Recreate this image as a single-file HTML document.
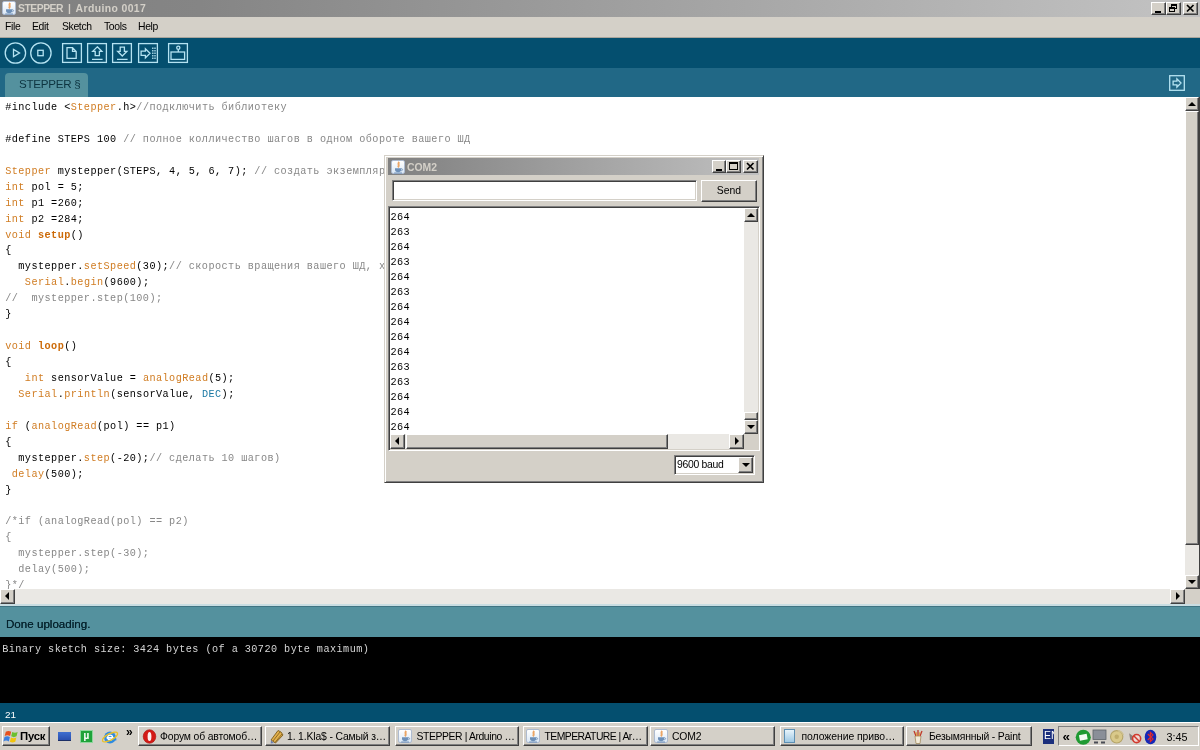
<!DOCTYPE html>
<html lang="ru">
<head>
<meta charset="utf-8">
<title>STEPPER | Arduino 0017</title>
<style>
*{box-sizing:border-box;margin:0;padding:0}
html,body{width:1200px;height:750px;overflow:hidden;background:#d4d0c8}
body{will-change:transform;position:relative;font-family:"Liberation Sans","DejaVu Sans",sans-serif;font-size:10.5px;color:#000}
.abs{position:absolute}
#titlebar{left:0;top:0;width:1200px;height:17px;background:linear-gradient(to right,#808080 0,#858585 200px,#c0c0c0 1150px,#c0c0c0 100%)}
#titletext{left:18px;top:1px;height:15px;line-height:15px;font-weight:bold;font-size:10.4px;color:#d4d0c8;white-space:nowrap;letter-spacing:0.22px}
#menubar{left:0;top:17px;width:1200px;height:20px;background:#d4d0c8}
.mi{top:20px;height:14px;line-height:14px;font-size:10.4px;white-space:nowrap;letter-spacing:-0.35px}
#toolbar{left:0;top:37px;width:1200px;height:31px;background:#044f6f;border-top:1px solid #a9a59c}
#tabbar{left:0;top:68px;width:1200px;height:29px;background:#216886}
#tab{left:5px;top:73px;width:83px;height:24px;background:#54919e;border-radius:4px 4px 0 0}
#tabtext{left:19px;top:77px;height:14px;line-height:14px;font-size:11.6px;color:#0d3440;white-space:nowrap;letter-spacing:-0.25px}
#editor{left:0;top:97px;width:1185px;height:492px;background:#fff;overflow:hidden}
pre.code{position:absolute;left:5.200px;top:3px;font-family:"Liberation Mono","DejaVu Sans Mono",monospace;font-size:10.200px;letter-spacing:0.4425px;line-height:15.9375px;color:#000;white-space:pre}
.k{color:#d07c22}.kb{color:#cc6a08;font-weight:bold}.c{color:#878787}.l{color:#1a78a3}
.btn{background:#d4d0c8;border:1px solid;border-color:#fff #404040 #404040 #fff;box-shadow:inset -1px -1px 0 #808080}
.track{background:#eae8e4}
#status{left:0;top:605.500px;width:1200px;height:32px;background:#54919e;border-top:1px solid #3f7482}
#statustext{left:6px;top:617px;height:14px;line-height:14px;font-size:11.6px;color:#06242e;white-space:nowrap;text-shadow:0 0 .6px #06242e}
#console{left:0;top:637px;width:1200px;height:66px;background:#000}
#context{left:2.200px;top:642px;font-family:"Liberation Mono","DejaVu Sans Mono",monospace;font-size:10.200px;letter-spacing:0.4425px;line-height:15px;color:#d6d6d6;white-space:pre}
#linestatus{left:0;top:703px;width:1200px;height:19px;background:#044f6f}
#linenum{left:5px;top:708.500px;font-size:9.9px;line-height:12px;color:#fff}
#taskbar{left:0;top:722px;width:1200px;height:28px;background:#d4d0c8;border-top:1px solid #fff}
.tb{top:726px;height:20px;font-size:10.4px;line-height:18px;white-space:nowrap;overflow:hidden;padding-left:22px}

.cap{top:2px;width:15px;height:13px}
.ico{stroke:#b5e3f2;fill:none;stroke-width:1.3}
.sq{top:43px;width:20px;height:20px;border:1.5px solid #b5e3f2}
svg{position:absolute;overflow:visible}
.java{width:14px;height:14px;background:linear-gradient(#ffffff,#dbe8f6);border:1px solid #aebbd0;border-radius:2px}
.arrow{position:absolute;width:0;height:0;border:4px solid transparent}

#com{left:384px;top:155px;width:380px;height:328px;background:#d4d0c8;border:1px solid;border-color:#d4d0c8 #404040 #404040 #d4d0c8;box-shadow:inset 1px 1px 0 #fff,inset -1px -1px 0 #808080}
#comtitle{left:3px;top:2px;width:371px;height:17px;background:linear-gradient(to right,#808080,#c0c0c0)}
#comtext{left:22px;top:4px;height:15px;line-height:15px;font-weight:bold;font-size:10.4px;color:#d4d0c8;white-space:nowrap}
.sunk{border:1px solid;border-color:#808080 #fff #fff #808080;box-shadow:inset 1px 1px 0 #404040,inset -1px -1px 0 #d4d0c8;background:#fff}
#serial{left:5.500px;top:53.800px;font-family:"Liberation Mono","DejaVu Sans Mono",monospace;font-size:10.200px;letter-spacing:0.4425px;line-height:15px;color:#000;white-space:pre}

.tbtn{position:absolute;top:726px;height:20px;width:124px;font-size:10.4px;line-height:19px;white-space:nowrap;overflow:hidden;padding-left:21px;letter-spacing:-0.15px}
.tbi{position:absolute;top:729px;width:14px;height:14px}
</style>
</head>
<body>
<div id="titlebar" class="abs"></div>
<div id="titletext" class="abs"><span style="letter-spacing:-0.5px;word-spacing:2.700px">STEPPER | </span><span style="letter-spacing:0.4px">Arduino 0017</span></div>
<!-- title bar icon and caption buttons -->
<div class="abs java" style="left:2px;top:1px"><svg width="13" height="13" style="left:0;top:0" viewBox="0 0 13 13"><path d="M7.2 1 C5 3.2 8.2 4 6 6.4" stroke="#eba565" stroke-width="2" fill="none"/><path d="M3 7.2h6.2v1.6c0 1.6-1.2 2.4-3.1 2.4S3 10.400 3 8.800z" fill="#6e90b8"/><path d="M9.200 7.700c1.800-.2 1.800 2 0 2" stroke="#6e90b8" stroke-width=".9" fill="none"/><path d="M2.200 12h7.800" stroke="#6e90b8" stroke-width="1"/></svg></div>
<div class="abs btn cap" style="left:1151px"><div class="abs" style="left:3px;top:8px;width:6px;height:2px;background:#000"></div></div>
<div class="abs btn cap" style="left:1166px"><div class="abs" style="left:4px;top:1px;width:6px;height:5px;border:1px solid #000;border-top-width:2px"></div><div class="abs" style="left:2px;top:4px;width:6px;height:5px;border:1px solid #000;border-top-width:2px;background:#d4d0c8"></div></div>
<div class="abs btn cap" style="left:1183px"><svg width="13" height="11" style="left:0;top:0" viewBox="0 0 13 11"><path d="M3 2l6.500 6.500M9.500 2L3 8.500" stroke="#000" stroke-width="1.7"/></svg></div>
<div id="menubar" class="abs"></div>
<div class="abs mi" style="left:5px">File</div>
<div class="abs mi" style="left:32px">Edit</div>
<div class="abs mi" style="left:62px">Sketch</div>
<div class="abs mi" style="left:104px">Tools</div>
<div class="abs mi" style="left:138px">Help</div>
<div id="toolbar" class="abs"></div>
<div id="tabbar" class="abs"></div>
<div id="tab" class="abs"></div>
<div id="tabtext" class="abs">STEPPER §</div>
<!-- toolbar icons -->
<svg width="190" height="31" style="left:0;top:37px" viewBox="0 0 190 31">
<g class="ico">
<circle cx="15.400" cy="16" r="10.200"/>
<path d="M13.500 12.500v7l6-3.500z"/>
<circle cx="40.900" cy="16" r="10.200"/>
<rect x="37.800" y="13.300" width="5.400" height="5.400"/>
<rect x="62.600" y="6.600" width="18.800" height="18.800"/>
<path d="M67 10.700h5.500l3.700 3.700v7h-9.200z M72.500 10.700v3.700h3.700"/>
<rect x="87.600" y="6.600" width="18.800" height="18.800"/>
<path d="M97.300 9.800l4.600 4.600h-2.500v4.300h-4.200v-4.300h-2.500z M92 22.300h10.600"/>
<rect x="112.600" y="6.600" width="18.800" height="18.800"/>
<path d="M122.300 19l4.600-4.600h-2.500v-4.300h-4.200v4.300h-2.500z M117 22.300h10.600"/>
<rect x="138.600" y="6.600" width="18.800" height="18.800"/>
<path d="M150 16.300l-4.600-4.600v2.500h-4.300v4.200h4.300v2.500z"/>
<path d="M152.800 10.500v11.500 M155 10.500v11.500" stroke-dasharray="1.500 1"/>
<rect x="168.600" y="6.600" width="18.800" height="18.800"/>
<rect x="171" y="15" width="13.600" height="7.400"/>
<circle cx="178.300" cy="10.800" r="1.600"/>
<path d="M178.300 12.400v2.600"/>
</g>
</svg>
<!-- tab menu button -->
<svg width="17" height="17" style="left:1169px;top:75px" viewBox="0 0 17 17"><g class="ico"><rect x=".7" y=".7" width="14.600" height="14.600"/><path d="M12 8l-4.100-4.100v2.200h-3.800v3.800h3.800v2.200z"/></g></svg>
<div id="editor" class="abs">
<pre class="code">#include &lt;<span class="k">Stepper</span>.h&gt;<span class="c">//подключить библиотеку</span>

#define STEPS 100 <span class="c">// полное колличество шагов в одном обороте вашего ШД</span>

<span class="k">Stepper</span> mystepper(STEPS, 4, 5, 6, 7); <span class="c">// создать экземпляр</span>
<span class="k">int</span> pol = 5;
<span class="k">int</span> p1 =260;
<span class="k">int</span> p2 =284;
<span class="k">void</span> <span class="kb">setup</span>()
{
  mystepper.<span class="k">setSpeed</span>(30);<span class="c">// скорость вращения вашего ШД, х</span>
   <span class="k">Serial</span>.<span class="k">begin</span>(9600);
<span class="c">//  mystepper.step(100);</span>
}

<span class="k">void</span> <span class="kb">loop</span>()
{
   <span class="k">int</span> sensorValue = <span class="k">analogRead</span>(5);
  <span class="k">Serial</span>.<span class="k">println</span>(sensorValue, <span class="l">DEC</span>);

<span class="k">if</span> (<span class="k">analogRead</span>(pol) == p1)
{
  mystepper.<span class="k">step</span>(-20);<span class="c">// сделать 10 шагов)</span>
 <span class="k">delay</span>(500);
}

<span class="c">/*if (analogRead(pol) == p2)
{
  mystepper.step(-30);
  delay(500);
}*/</span></pre>
</div>
<!-- editor scrollbars -->
<div class="abs track" style="left:1185px;top:97px;width:15px;height:492px"></div>
<div class="abs" style="left:1199px;top:97px;width:1px;height:492px;background:#404040"></div>
<div class="abs btn" style="left:1185px;top:97px;width:14px;height:14px"><div class="arrow" style="left:2px;top:0px;border-bottom-color:#000"></div></div>
<div class="abs btn" style="left:1185px;top:111px;width:14px;height:434px"></div>
<div class="abs btn" style="left:1185px;top:575px;width:14px;height:14px"><div class="arrow" style="left:2px;top:4px;border-top-color:#000"></div></div>
<div class="abs track" style="left:0;top:589px;width:1185px;height:15px"></div>
<div class="abs btn" style="left:0;top:589px;width:15px;height:15px"><div class="arrow" style="left:0px;top:2px;border-right-color:#000"></div></div>
<div class="abs btn" style="left:1170px;top:589px;width:15px;height:15px"><div class="arrow" style="left:5px;top:2px;border-left-color:#000"></div></div>
<div class="abs" style="left:1185px;top:589px;width:15px;height:16px;background:#d4d0c8"></div>
<div class="abs" style="left:0;top:604px;width:1200px;height:2px;background:#c9dde2"></div>
<!-- COM2 serial monitor window -->
<div id="com" class="abs">
<div id="comtitle" class="abs"></div>
<div class="abs java" style="left:5.500px;top:4px;width:14px;height:14px"><svg width="13" height="13" style="left:0;top:0" viewBox="0 0 13 13"><path d="M7.2 1 C5 3.2 8.2 4 6 6.4" stroke="#eba565" stroke-width="2" fill="none"/><path d="M3 7.2h6.2v1.6c0 1.6-1.2 2.4-3.1 2.4S3 10.400 3 8.800z" fill="#6e90b8"/><path d="M9.200 7.700c1.800-.2 1.800 2 0 2" stroke="#6e90b8" stroke-width=".9" fill="none"/><path d="M2.200 12h7.800" stroke="#6e90b8" stroke-width="1"/></svg></div>
<div id="comtext" class="abs">COM2</div>
<div class="abs btn" style="left:327px;top:4px;width:14px;height:13px"><div class="abs" style="left:3px;top:8px;width:6px;height:2px;background:#000"></div></div>
<div class="abs btn" style="left:341px;top:4px;width:15px;height:13px"><div class="abs" style="left:2px;top:1px;width:9px;height:8px;border:1px solid #000;border-top-width:2px"></div></div>
<div class="abs btn" style="left:358px;top:4px;width:15px;height:13px"><svg width="13" height="11" style="left:0;top:0" viewBox="0 0 13 11"><path d="M3 2l6.500 6.500M9.500 2L3 8.500" stroke="#000" stroke-width="1.700"/></svg></div>
<div class="abs sunk" style="left:6.500px;top:24px;width:305.500px;height:21px"></div>
<div class="abs btn" style="left:316px;top:24px;width:56px;height:22px;text-align:center;line-height:19px;font-size:10.4px">Send</div>
<div class="abs sunk" style="left:3px;top:50px;width:372px;height:245px"></div>
<div id="serial" class="abs">264
263
264
263
264
263
264
264
264
264
263
263
264
264
264</div>
<!-- vertical scrollbar -->
<div class="abs track" style="left:359px;top:52px;width:14px;height:226px"></div>
<div class="abs btn" style="left:359px;top:52px;width:14px;height:14px"><div class="arrow" style="left:2px;top:0px;border-bottom-color:#000"></div></div>
<div class="abs btn" style="left:359px;top:256px;width:14px;height:8px"></div>
<div class="abs btn" style="left:359px;top:264px;width:14px;height:14px"><div class="arrow" style="left:2px;top:4px;border-top-color:#000"></div></div>
<!-- horizontal scrollbar -->
<div class="abs track" style="left:5px;top:278px;width:354px;height:15px"></div>
<div class="abs btn" style="left:5px;top:278px;width:15px;height:15px"><div class="arrow" style="left:0px;top:2px;border-right-color:#000"></div></div>
<div class="abs btn" style="left:21px;top:278px;width:262px;height:15px"></div>
<div class="abs btn" style="left:344px;top:278px;width:15px;height:15px"><div class="arrow" style="left:5px;top:2px;border-left-color:#000"></div></div>
<div class="abs" style="left:359px;top:278px;width:14px;height:15px;background:#d4d0c8"></div>
<!-- baud combo -->
<div class="abs sunk" style="left:289px;top:299px;width:81px;height:20px"></div>
<div class="abs" style="left:292px;top:302px;font-size:10.4px;line-height:14px;white-space:nowrap;letter-spacing:-0.3px">9600 baud</div>
<div class="abs btn" style="left:353px;top:301px;width:15px;height:16px"><div class="arrow" style="left:2.500px;top:5px;border-top-color:#000"></div></div>
</div>
<div id="status" class="abs"></div>
<div id="statustext" class="abs">Done uploading.</div>
<div id="console" class="abs"></div>
<div id="context" class="abs">Binary sketch size: 3424 bytes (of a 30720 byte maximum)</div>
<div id="linestatus" class="abs"></div>
<div id="linenum" class="abs">21</div>
<div id="taskbar" class="abs"></div>
<!-- taskbar -->
<div class="abs btn" style="left:2px;top:726px;width:48px;height:20px"></div>
<svg width="16.500" height="14" style="left:3.500px;top:728.500px" viewBox="0 0 15 13"><path d="M1.500 2.500q2.500-1.500 5 0l-1 4q-2.500-1.500-5 0z" fill="#e6501e"/><path d="M7.500 2.800q2.500 1.500 5 0l-1 4q-2.500 1.500-5 0z" fill="#6cc02e"/><path d="M0.300 7.500q2.500-1.500 5 0l-1 4q-2.500-1.500-5 0z" fill="#3b7fe0"/><path d="M6.300 7.800q2.500 1.500 5 0l-1 4q-2.500 1.500-5 0z" fill="#f2c40c"/></svg>
<div class="abs" style="left:20px;top:728px;font-size:11.3px;line-height:16px;font-weight:bold;white-space:nowrap;letter-spacing:-0.2px">Пуск</div>
<!-- quick launch -->
<div class="abs" style="left:58px;top:732px;width:13px;height:9px;background:linear-gradient(#3f6fd0,#2a4fae);border-bottom:1px solid #1d2f66"></div>
<div class="abs" style="left:80px;top:730px;width:13px;height:13px;background:#1fa33a;border:1px solid #8fd69c;color:#fff;font-weight:bold;font-size:10px;line-height:10px;text-align:center">µ</div>
<svg width="18" height="16" style="left:100.500px;top:728.500px" viewBox="0 0 17 15"><circle cx="8.500" cy="8" r="5.600" fill="#2f8be0"/><path d="M5.300 8.300h6.600" stroke="#fff" stroke-width="1.700"/><circle cx="8.600" cy="8" r="2.300" fill="none" stroke="#fff" stroke-width="1.200"/><path d="M11 9.800h3.500" stroke="#2f8be0" stroke-width="2"/><ellipse cx="8.500" cy="7.500" rx="8" ry="3" transform="rotate(-28 8.500 7.500)" fill="none" stroke="#e8c02a" stroke-width="1.300"/></svg>
<div class="abs" style="left:126px;top:725px;font-size:12px;line-height:14px;font-weight:bold">»</div>
<!-- task buttons -->
<div class="tbtn btn" style="left:138px">Форум об автомоб…</div>
<svg width="15" height="15" style="left:142px;top:729px" viewBox="0 0 15 15"><ellipse cx="7.500" cy="7.500" rx="6.300" ry="6.800" fill="#d41a16" stroke="#a80f0c" stroke-width=".6"/><ellipse cx="7.500" cy="7.500" rx="1.900" ry="4.500" fill="#fdeeee"/></svg>
<div class="tbtn btn" style="left:265px;width:125px">1. 1.Kla$ - Самый з…</div>
<svg width="16" height="15" style="left:269px;top:729px" viewBox="0 0 16 15"><path d="M2 11l7-9.500 3 1.500 2 3-7.500 8z" fill="#e3b04b" stroke="#7a5a1c" stroke-width=".9"/><path d="M4 12l7-9M6 13.500l7-8.500" stroke="#7a5a1c" stroke-width=".8" fill="none"/><path d="M2 11l1.800 2.200 1.700.8-3.800.6z" fill="#6c7fae"/></svg>
<div class="tbtn btn" style="left:394.500px;letter-spacing:-0.4px">STEPPER | Arduino …</div>
<div class="abs java" style="left:398px;top:729px;width:14px;height:14px"><svg width="13" height="13" style="left:0;top:0" viewBox="0 0 13 13"><path d="M7.2 1 C5 3.2 8.2 4 6 6.4" stroke="#eba565" stroke-width="2" fill="none"/><path d="M3 7.200h6.200v1.600c0 1.600-1.200 2.400-3.100 2.400S3 10.400 3 8.800z" fill="#6e90b8"/><path d="M9.200 7.700c1.800-.2 1.800 2 0 2" stroke="#6e90b8" stroke-width=".9" fill="none"/><path d="M2.200 12h7.800" stroke="#6e90b8" stroke-width="1"/></svg></div>
<div class="tbtn btn" style="left:522.500px;width:125px;letter-spacing:-0.55px">TEMPERATURE | Ar…</div>
<div class="abs java" style="left:526px;top:729px;width:14px;height:14px"><svg width="13" height="13" style="left:0;top:0" viewBox="0 0 13 13"><path d="M7.2 1 C5 3.2 8.2 4 6 6.4" stroke="#eba565" stroke-width="2" fill="none"/><path d="M3 7.200h6.200v1.600c0 1.600-1.200 2.400-3.100 2.400S3 10.400 3 8.800z" fill="#6e90b8"/><path d="M9.200 7.700c1.800-.2 1.800 2 0 2" stroke="#6e90b8" stroke-width=".9" fill="none"/><path d="M2.200 12h7.800" stroke="#6e90b8" stroke-width="1"/></svg></div>
<div class="tbtn btn" style="left:650px;width:125px">COM2</div>
<div class="abs java" style="left:654px;top:729px;width:14px;height:14px"><svg width="13" height="13" style="left:0;top:0" viewBox="0 0 13 13"><path d="M7.2 1 C5 3.2 8.2 4 6 6.4" stroke="#eba565" stroke-width="2" fill="none"/><path d="M3 7.200h6.200v1.600c0 1.600-1.200 2.400-3.100 2.400S3 10.400 3 8.800z" fill="#6e90b8"/><path d="M9.200 7.700c1.800-.2 1.800 2 0 2" stroke="#6e90b8" stroke-width=".9" fill="none"/><path d="M2.200 12h7.800" stroke="#6e90b8" stroke-width="1"/></svg></div>
<div class="tbtn btn" style="left:779.500px;letter-spacing:-0.05px">положение приво…</div>
<div class="abs" style="left:784px;top:729px;width:11px;height:14px;background:linear-gradient(#e8f4fb,#9fc9e4);border:1px solid #5d8fb3"></div>
<div class="tbtn btn" style="left:906px;width:126px;padding-left:22px;letter-spacing:-0.2px">Безымянный - Paint</div>
<svg width="14" height="15" style="left:911px;top:729px" viewBox="0 0 14 15"><path d="M4 7h6l-1 7.500h-4z" fill="#f2ead8" stroke="#a08a60" stroke-width=".8"/><path d="M5 7l-2-5M7 7v-6M9 7l2-5" stroke="#c0392b" stroke-width="1.300"/><path d="M6 7l-1-4M8 7l1-4" stroke="#d9a441" stroke-width="1"/></svg>
<!-- language + tray -->
<div class="abs" style="left:1043px;top:729px;width:11px;height:15px;background:#1c2f7c;color:#fff;font-size:10.4px;line-height:14px;overflow:hidden;white-space:nowrap;padding-left:1px">EN</div>
<div class="abs" style="left:1058px;top:726px;width:141px;height:20px;border:1px solid;border-color:#808080 #fff #fff #808080"></div>
<div class="abs" style="left:1062.500px;top:729.500px;font-size:13.500px;line-height:14px;font-weight:bold">«</div>
<svg width="16.500" height="16.500" style="left:1074.500px;top:728.500px" viewBox="0 0 16 16"><circle cx="8" cy="8" r="7.300" fill="#1f9a32"/><path d="M3.800 6l7.500-1.300 1 5.300-7.500 1.300z" fill="#f4fbf4"/></svg>
<svg width="15" height="16" style="left:1092px;top:729px" viewBox="0 0 15 16"><rect x="1" y="1" width="13" height="9.500" fill="#8a8f98" stroke="#5d6168" stroke-width=".8"/><path d="M2 13.500h4M9 13.500h4" stroke="#4a4d55" stroke-width="1.800"/></svg>
<svg width="16.500" height="16.500" style="left:1108.500px;top:727.500px" viewBox="0 0 15 15"><circle cx="7" cy="8" r="5.600" fill="#d9c98a" stroke="#b5a468" stroke-width="1"/><circle cx="7" cy="8" r="2" fill="#c0ad6c"/><path d="M8 2.500q4 .5 5 4" stroke="#cdbf8e" stroke-width="1.200" fill="none"/></svg>
<svg width="16" height="16" style="left:1126.500px;top:729px" viewBox="0 0 15 15"><path d="M2 4l4 3v4l-3-1z" fill="#8b7d7a"/><circle cx="9" cy="9" r="3.800" fill="#f1d9d5" stroke="#d13a2e" stroke-width="1.500"/><path d="M6.500 6.500l5 5" stroke="#d13a2e" stroke-width="1.400"/></svg>
<svg width="13" height="16" style="left:1143.500px;top:728.500px" viewBox="0 0 13 16"><ellipse cx="6.500" cy="8" rx="5.800" ry="7.300" fill="#1428b8"/><path d="M3.800 5l5.200 5-2.600 2.500v-9l2.600 2.500-5.200 5" fill="none" stroke="#e02a2a" stroke-width="1.200"/></svg>
<div class="abs" style="left:1166.500px;top:729px;font-size:10.800px;line-height:16px;white-space:nowrap">3:45</div>

</body>
</html>
